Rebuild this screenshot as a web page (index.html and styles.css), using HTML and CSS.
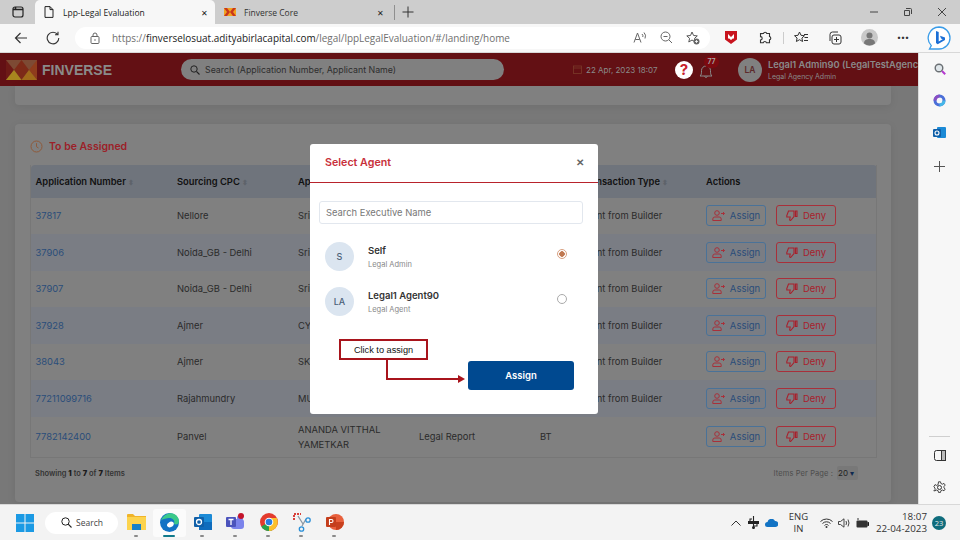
FILE: index.html
```html
<!DOCTYPE html>
<html lang="en">
<head>
    <meta charset="UTF-8">
    <title>Lpp-Legal Evaluation</title>
    <link rel="stylesheet" href="styles.css">
</head>
<body>
    <div class="tabstrip">
        <div class="win-btn"><svg width="12" height="12" viewBox="0 0 12 12"><rect x="1" y="1" width="10" height="10" rx="2" fill="none" stroke="#222" stroke-width="1.2"/><path d="M1 3.5h10M3.5 1v2.5" stroke="#222" stroke-width="1.6"/></svg></div>
        <div class="tab tab-active">
            <svg width="10" height="12" viewBox="0 0 10 12"><path d="M1 .6h5l3 3v7.8H1zM6 .6v3h3" fill="none" stroke="#222" stroke-width="1"/></svg>
            <span class="tab-title">Lpp-Legal Evaluation</span>
            <span class="tab-x">✕</span>
        </div>
        <div class="tab">
            <svg width="12" height="8" viewBox="0 0 12 8"><rect width="12" height="8" fill="#c8361c"/><path d="M0 0l3 4-3 4zM12 0L9 4l3 4zM3 0l3 4 3-4zM3 8l3-4 3 4z" fill="#f2a21e"/></svg>
            <span class="tab-title">Finverse Core</span>
            <span class="tab-x">✕</span>
        </div>
        <div class="tab-sep"></div>
        <svg class="tab-plus" width="12" height="12" viewBox="0 0 12 12"><path d="M6 .5v11M.5 6h11" stroke="#333" stroke-width="1"/></svg>
        <div class="win-controls">
            <svg width="10" height="10" viewBox="0 0 10 10"><path d="M1 5h8" stroke="#444" stroke-width="1"/></svg>
            <svg width="10" height="10" viewBox="0 0 10 10"><path d="M3 1.5h4.5q1 0 1 1V7M1.5 3.5h5v5h-5z" fill="none" stroke="#444" stroke-width="1"/></svg>
            <svg width="10" height="10" viewBox="0 0 10 10"><path d="M1 1l8 8M9 1l-8 8" stroke="#444" stroke-width="1"/></svg>
        </div>
    </div>

    <div class="toolbar">
        <div class="tool"><svg width="14" height="12" viewBox="0 0 14 12"><path d="M13 6H1.5M6.5 1l-5 5 5 5" fill="none" stroke="#333" stroke-width="1.2"/></svg></div>
        <div class="tool"><svg width="14" height="14" viewBox="0 0 14 14"><path d="M11.7 3.6A5.8 5.8 0 1 0 12.8 7M12 .8v3h-3" fill="none" stroke="#333" stroke-width="1.1"/></svg></div>
        <div class="addressbar">
            <svg width="10" height="12" viewBox="0 0 10 12"><rect x="1" y="4.5" width="8" height="7" rx="1" fill="none" stroke="#666"/><path d="M3 4.5V3a2 2 0 0 1 4 0v1.5" fill="none" stroke="#666"/><circle cx="5" cy="8" r=".8" fill="#666"/></svg>
            <span class="url">https://<b>finverselosuat.adityabirlacapital.com</b>/legal/lppLegalEvaluation/#/landing/home</span>
            <div class="address-icons">
                <svg width="14" height="13" viewBox="0 0 14 13"><path d="M1 11.5L4.5 2 8 11.5M2.3 8.5h4.4M9 3q1.400 1.500.8 3M11 1.500q2.500 2.500 1 6" fill="none" stroke="#666" stroke-width="1"/></svg>
                <svg width="13" height="13" viewBox="0 0 13 13"><circle cx="5.500" cy="5.500" r="4.500" fill="none" stroke="#666"/><path d="M8.800 8.800L12 12M3.500 5.500h4" stroke="#666"/></svg>
                <svg width="14" height="14" viewBox="0 0 14 14"><path d="M6 1l1.600 3.500 3.700.4-2.800 2.500.8 3.600L6 9 2.800 11l.8-3.600L.8 4.900l3.700-.4z" fill="none" stroke="#555"/><circle cx="10.500" cy="10.500" r="3" fill="#666"/><path d="M10.500 9v3M9 10.500h3" stroke="#fff" stroke-width=".8"/></svg>
            </div>
        </div>
        <div class="tool-group">
            <div class="tool"><svg width="12" height="13" viewBox="0 0 12 13"><path d="M0 0h12v8.500L6 13 0 8.500z" fill="#c8141e"/><path d="M3 3l3 3 3-3v4.500H7.800L6 9 4.200 7.500H3z" fill="#fff"/></svg></div>
            <div class="tool"><svg width="14" height="14" viewBox="0 0 14 14"><path d="M5.500 2.500a1.700 1.700 0 0 1 3.300 0h2.700v3a1.700 1.700 0 0 1 0 3.300v3H8.500a1.700 1.700 0 0 0-3.300 0H2.500V9a1.700 1.700 0 0 0 0-3.400v-3z" fill="none" stroke="#333" stroke-width="1.100"/></svg></div>
            <div class="tool-sep"></div>
            <div class="tool"><svg width="14" height="13" viewBox="0 0 14 13"><path d="M5.500 1l1.500 3.300 3.500.4-2.600 2.300.7 3.500-3.100-1.800-3.100 1.800.7-3.500L.500 4.700 4 4.300zM10 3.500h4M10.500 6.500H14M10 9.500h4" fill="none" stroke="#333" stroke-width="1"/></svg></div>
            <div class="tool"><svg width="14" height="14" viewBox="0 0 14 14"><rect x="4" y="4" width="9" height="9" rx="2" fill="none" stroke="#333"/><path d="M2 10V3.500A2.500 2.500 0 0 1 4.500 1H10M8.500 6v5M6 8.500h5" fill="none" stroke="#333"/></svg></div>
            <div class="tool"><svg width="17" height="17" viewBox="0 0 17 17"><circle cx="8.500" cy="8.500" r="8.500" fill="#c9c9c9"/><circle cx="8.500" cy="6.500" r="3" fill="#777"/><path d="M3 14.500c0-3.500 2.500-4.500 5.500-4.500s5.500 1 5.500 4.500q-2.500 2-5.500 2t-5.500-2z" fill="#777"/></svg></div>
            <div class="tool more">···</div>
            <div class="tool bing-btn"><svg width="24" height="24" viewBox="0 0 24 24"><path d="M12 1a11 11 0 0 1 0 22H2.500l1.800-3.400A11 11 0 0 1 12 1z" fill="#fff" stroke="#3a9ce8" stroke-width="1.300"/><path d="M9 5l2.700 1v9.500l4-2.300-1.700-.8-1-2.600 5 1.700v2.600l-7.300 4.200L9 17z" fill="#1b6fd6"/></svg></div>
        </div>
    </div>

    <div class="main">
        <div class="page">
            <header class="appbar">
                <svg class="logo" width="31" height="20" viewBox="0 0 31 20"><rect width="31" height="20" fill="#7d4a34"/><path d="M0 0l8 10-8 10z" fill="#6d1a16"/><path d="M31 0l-8 10 8 10z" fill="#8f3c1c"/><path d="M8 10l7.500-10L23 10l-7.500 10z" fill="#7d2a18"/><path d="M0 20l8-10 7.500 10z" fill="#a8861e"/><path d="M15.500 20L23 10l8 10z" fill="#a06a1a"/></svg>
                <span class="brand">FINVERSE</span>
                <div class="app-search">
                    <svg width="10" height="10" viewBox="0 0 10 10"><circle cx="4" cy="4" r="3.200" fill="none" stroke="#222" stroke-width="1"/><path d="M6.500 6.500L9.500 9.500" stroke="#222" stroke-width="1.100"/></svg>
                    <span>Search (Application Number, Applicant Name)</span>
                </div>
                <div class="app-date">
                    <svg width="9" height="9" viewBox="0 0 9 9"><rect x=".5" y="1" width="8" height="7.500" fill="none" stroke="#7a3a2a" stroke-width=".8"/><path d="M.5 3h8" stroke="#7a3a2a" stroke-width=".8"/></svg>
                    <span>22 Apr, 2023 18:07</span>
                </div>
                <div class="help">?</div>
                <div class="bell">
                    <svg width="14" height="16" viewBox="0 0 14 16"><path d="M1 13c1.500-1 1.500-3 1.500-5.500a4.500 4.500 0 0 1 9 0C11.500 10 11.500 12 13 13zM5.500 13.500q1.500 2 3 0" fill="none" stroke="#8a8a8a" stroke-width="1"/></svg>
                    <span class="bell-count">77</span>
                </div>
                <div class="user-avatar">LA</div>
                <div class="user-info">
                    <div class="user-name">Legal1 Admin90 (LegalTestAgency_1_90)</div>
                    <div class="user-role">Legal Agency Admin</div>
                </div>
            </header>

            <div class="content">
                <div class="card card-top"></div>
                <section class="card card-list">
                    <div class="card-title">
                        <svg width="13" height="13" viewBox="0 0 13 13"><circle cx="6.500" cy="6.500" r="5.500" fill="none" stroke="#8f5a3a" stroke-width="1"/><path d="M6.500 3.200v3.500l2 1.300" fill="none" stroke="#8f5a3a" stroke-width="1"/></svg>
                        <span>To be Assigned</span>
                    </div>
                    <table class="grid">
                        <colgroup>
                            <col class="c1"><col class="c2"><col class="c3"><col class="c4"><col class="c5"><col class="c6">
                        </colgroup>
                        <thead>
                            <tr>
                                <th>Application Number <span class="sort">⬍</span></th>
                                <th>Sourcing CPC <span class="sort">⬍</span></th>
                                <th>Applicant</th>
                                <th>Report Type</th>
                                <th class="th-type">Transaction Type <span class="sort">⬍</span></th>
                                <th>Actions</th>
                            </tr>
                        </thead>
                        <tbody id="rows"></tbody>
                    </table>
                    <div class="list-foot">
                        <div class="showing">Showing <b>1</b> to <b>7</b> of <b>7</b> Items</div>
                        <div class="per-page">Items Per Page : <span class="per-select">20 <i>▾</i></span></div>
                    </div>
                </section>
            </div>
        </div>

        <aside class="sidebar">
            <svg width="12" height="12" viewBox="0 0 12 12"><circle cx="5" cy="5" r="3.800" fill="#dfe6ea" stroke="#6a6f73" stroke-width="1.400"/><path d="M8 8l3.200 3.200" stroke="#b53ad0" stroke-width="2"/></svg>
            <svg width="13" height="13" viewBox="0 0 13 13"><circle cx="6.500" cy="6.500" r="4.500" fill="none" stroke="#4b6fd8" stroke-width="3"/><path d="M2 6.500a4.500 4.500 0 0 1 4.500-4.500" fill="none" stroke="#8a4fc4" stroke-width="3"/><path d="M11 6.500a4.500 4.500 0 0 1-4.500 4.500" fill="none" stroke="#45b8e8" stroke-width="3"/></svg>
            <svg width="13" height="13" viewBox="0 0 13 13"><rect x="4" y="1" width="9" height="11" rx="1" fill="#1b8ad6"/><rect y="3" width="8" height="8" rx="1" fill="#0f5fa8"/><circle cx="4" cy="7" r="2" fill="none" stroke="#fff" stroke-width="1.100"/></svg>
            <svg class="side-add" width="11" height="11" viewBox="0 0 11 11"><path d="M5.500 0v11M0 5.500h11" stroke="#555" stroke-width="1"/></svg>
            <div class="side-bottom">
                <div class="side-rule"></div>
                <svg width="12" height="11" viewBox="0 0 12 11"><rect x=".5" y=".5" width="11" height="10" rx="2" fill="none" stroke="#333"/><rect x="7.500" y=".5" width="4" height="10" fill="#bbb" stroke="#333"/></svg>
                <svg width="13" height="13" viewBox="0 0 13 13"><circle cx="6.500" cy="6.500" r="2" fill="none" stroke="#333"/><path d="M5.500 .8h2l.4 1.700 1.500.7 1.600-.8 1.200 1.700-1.200 1.200v1.600l1.200 1.200-1.200 1.700-1.600-.8-1.500.7-.4 1.700h-2l-.4-1.700-1.500-.7-1.600.8L.8 9.800 2 8.600V7L.8 5.800 2 3.600l1.600.8 1.500-.7z" fill="none" stroke="#333" stroke-width=".9"/></svg>
            </div>
        </aside>
    </div>

    <footer class="taskbar">
        <svg class="start" width="18" height="18" viewBox="0 0 18 18"><path d="M0 0h8.500v8.500H0zM9.500 0H18v8.500H9.500zM0 9.500h8.500V18H0zM9.500 9.500H18V18H9.500z" fill="#1b9ae4"/></svg>
        <div class="task-search">
            <svg width="11" height="11" viewBox="0 0 11 11"><circle cx="4.500" cy="4.500" r="3.700" fill="none" stroke="#222"/><path d="M7.200 7.200l3.300 3.300" stroke="#222" stroke-width="1.100"/></svg>
            <span>Search</span>
        </div>
        <div class="task-icons">
            <div class="task-app"><svg width="19" height="16" viewBox="0 0 19 16"><path d="M0 1q0-1 1-1h5l2 2h11v14H0z" fill="#f0b429"/><rect y="3" width="19" height="13" fill="#fcd34d"/><rect x="5" y="10" width="9" height="6" fill="#1580c8"/></svg></div>
            <div class="task-app app-on"><svg width="19" height="19" viewBox="0 0 19 19"><circle cx="9.500" cy="9.500" r="9.500" fill="#1273c4"/><path d="M1 7.500C3 2 8 0 11 .2c4.500.3 8 3.500 8 8.300 0 3-3 3.500-5 2.500 1.500-4-2-6.500-5.500-6C5 5.500 2.500 6 1 7.500z" fill="#3bc98a"/><path d="M9 9.500c1.500-2 5.500-1 4.800 1.800-.5 2.500-4 4-6 2.500-1.500-1-1-3.300 1.200-4.300z" fill="#fff"/></svg></div>
            <div class="task-app"><svg width="18" height="16" viewBox="0 0 18 16"><rect x="5" width="13" height="16" rx="1" fill="#1b8ad6"/><path d="M5 8h13v8H5z" fill="#0f6cbd"/><rect y="3" width="10" height="10" rx="1" fill="#0f5fa8"/><circle cx="5" cy="8" r="2.500" fill="none" stroke="#fff" stroke-width="1.300"/></svg></div>
            <div class="task-app"><svg width="19" height="18" viewBox="0 0 19 18"><circle cx="14" cy="5" r="3" fill="#7b83eb"/><rect x="5" y="6" width="13" height="10" rx="3" fill="#7b83eb"/><rect y="4" width="10" height="10" rx="1" fill="#4b53bc"/><path d="M2.500 6.500h5M5 6.500V12" stroke="#fff" stroke-width="1.300"/><circle cx="15" cy="3" r="3" fill="#c4142a"/></svg></div>
            <div class="task-app"><svg width="18" height="18" viewBox="0 0 18 18"><circle cx="9" cy="9" r="9" fill="#e33b2e"/><path d="M9 9L1.200 13.500A9 9 0 0 0 9 18c1 0 2-.2 3-.5z" fill="#2aa24a"/><path d="M9 5h7.800A9 9 0 0 1 9 18z" fill="#fbc02d"/><circle cx="9" cy="9" r="4.300" fill="#fff"/><circle cx="9" cy="9" r="3.300" fill="#2a7de1"/></svg></div>
            <div class="task-app"><svg width="18" height="19" viewBox="0 0 18 19"><path d="M1 7V1h7" fill="none" stroke="#d8403a" stroke-width="2" stroke-dasharray="2 1"/><path d="M5 3l5 8M13 6L9 13" stroke="#8a97a3" stroke-width="1.300"/><circle cx="15" cy="7" r="2.200" fill="none" stroke="#2a8fd8" stroke-width="1.300"/><circle cx="8.500" cy="16" r="2.200" fill="none" stroke="#2a8fd8" stroke-width="1.300"/></svg></div>
            <div class="task-app"><svg width="18" height="16" viewBox="0 0 18 16"><circle cx="10" cy="8" r="8" fill="#e8603c"/><path d="M10 8h8a8 8 0 0 1-8 8z" fill="#c8401e"/><rect y="3" width="10" height="10" rx="1" fill="#c43e1c"/><path d="M3.500 11V5.500h2a1.500 1.500 0 0 1 0 3h-2" fill="none" stroke="#fff" stroke-width="1.100"/></svg></div>
        </div>
        <div class="tray">
            <svg width="10" height="6" viewBox="0 0 10 6"><path d="M.5 5.500L5 1l4.500 4.500" fill="none" stroke="#333"/></svg>
            <svg width="13" height="13" viewBox="0 0 13 13"><path d="M6.500 0v13M3 5V3h2M10 8v2H7" fill="none" stroke="#222" stroke-width="1.100"/><rect x="1" y="5" width="11" height="3" fill="#222"/><circle cx="6.500" cy="11.500" r="1.500" fill="#222"/></svg>
            <svg width="13" height="8" viewBox="0 0 13 8"><path d="M2.500 8a2.500 2.500 0 0 1 0-5 4 4 0 0 1 7.500-1 3 3 0 0 1 .5 6z" fill="#1273c4"/></svg>
            <div class="lang">ENG<br>IN</div>
            <svg width="13" height="10" viewBox="0 0 13 10"><path d="M.5 3.500a8.500 8.500 0 0 1 12 0M2.500 5.500a5.500 5.500 0 0 1 8 0M4.500 7.500a2.500 2.500 0 0 1 4 0" fill="none" stroke="#333"/><circle cx="6.500" cy="9" r="1" fill="#333"/></svg>
            <svg width="12" height="10" viewBox="0 0 12 10"><path d="M.5 3.500h2L6 .8v8.400L2.500 6.500h-2zM8 3q1 2 0 4M10 1.500q2 3.500 0 7" fill="none" stroke="#333" stroke-width=".9"/></svg>
            <svg width="13" height="10" viewBox="0 0 13 10"><rect x=".5" y="2.500" width="11" height="7" rx="1" fill="#333"/><path d="M11.500 4.500h1.500v3h-1.500M2 2V0" stroke="#333"/></svg>
            <div class="clock"><div>18:07</div><div>22-04-2023</div></div>
            <div class="notif">23</div>
        </div>
    </footer>

    <!-- dialog, with the tutorial callout on top of it -->
    <div class="modal">
        <div class="modal-head">
            <span>Select Agent</span>
            <span class="modal-x">✕</span>
        </div>
        <div class="modal-body">
            <div class="exec-search">Search Executive Name</div>
            <div class="agent">
                <div class="agent-avatar">S</div>
                <div class="agent-text"><div class="agent-name">Self</div><div class="agent-role">Legal Admin</div></div>
                <div class="radio radio-on"></div>
            </div>
            <div class="agent">
                <div class="agent-avatar">LA</div>
                <div class="agent-text"><div class="agent-name">Legal1 Agent90</div><div class="agent-role">Legal Agent</div></div>
                <div class="radio"></div>
            </div>
            <div class="modal-foot"><button class="assign-main">Assign</button></div>
        </div>
    </div>
    <div class="callout">Click to assign</div>
    <svg class="callout-line" width="84" height="24" viewBox="0 0 84 24"><path d="M1 0v19h72" fill="none" stroke="#a8141c" stroke-width="2"/><path d="M72 15l7 4-7 4z" fill="#a8141c"/></svg>

    <script>
        const data = [
            ["37817", "Nellore", "Sri"],
            ["37906", "Noida_GB - Delhi", "Sri"],
            ["37907", "Noida_GB - Delhi", "Sri"],
            ["37928", "Ajmer", "CY"],
            ["38043", "Ajmer", "SK"],
            ["77211099716", "Rajahmundry", "MU"],
            ["7782142400", "Panvel", "ANANDA VITTHAL YAMETKAR"]
        ];
        const assignIcon = '<svg width="13" height="11" viewBox="0 0 13 11"><circle cx="5" cy="3" r="2.300" fill="none" stroke="#a8303a"/><path d="M.8 10.500V9q0-2 2-2h4.400q2 0 2 2v1.500zM9 3.500h3.500M11 2l1.500 1.500L11 5" fill="none" stroke="#a8303a"/></svg>';
        const denyIcon = '<svg width="12" height="11" viewBox="0 0 12 11"><path d="M8 1H2.500L.8 5.500V7h3.400l-.6 3 1 .5L8 6.500zM9.500 1H11v5.500H9.500z" fill="none" stroke="#a8202c" stroke-width="1.100"/></svg>';
        let tabla = '';
        data.forEach(function (r, i) {
            const last = i === data.length - 1;
            tabla += `<tr class="${last ? 'row-last' : ''}">
                        <td><span class="app-link">${r[0]}</span></td>
                        <td>${r[1]}</td>
                        <td>${r[2]}</td>
                        <td>${last ? 'Legal Report' : ''}</td>
                        <td>${last ? 'BT' : 'Flat Apartment from Builder'}</td>
                        <td>
                            <div class="actions">
                                <span class="btn btn-assign">${assignIcon}Assign</span>
                                <span class="btn btn-deny">${denyIcon}Deny</span>
                            </div>
                        </td>
                      </tr>`;
        });
        document.getElementById("rows").innerHTML = tabla;
    </script>
</body>
</html>
```

FILE: styles.css
```css
* {
    box-sizing: border-box;
}
html, body {
    margin: 0;
    height: 100%;
}
body {
    width: 960px;
    height: 540px;
    overflow: hidden;
    display: flex;
    flex-direction: column;
    font-family: "Open Sans", sans-serif;
    color: #222;
    background: #f7f7f7;
}

/* browser chrome */
.tabstrip {
    height: 24px;
    flex: none;
    display: flex;
    align-items: flex-end;
    background: #cdcdcd;
}
.win-btn {
    width: 35px;
    height: 24px;
    display: flex;
    align-items: center;
    justify-content: center;
}
.tab {
    width: 176px;
    height: 24px;
    padding: 0 7px 0 9px;
    display: flex;
    align-items: center;
    font-size: 8.5px;
    color: #333;
}
.tab-active {
    width: 180px;
    background: #f7f7f7;
    border-radius: 5px 5px 0 0;
    color: #222;
}
.tab svg {
    margin: 0 8px 0 0;
    flex: none;
}
.tab-active svg {
    margin: 0 9px 0 0;
}
.tab-title {
    flex: 1;
}
.tab-x {
    font-size: 8px;
    color: #222;
}
.tab-sep {
    width: 1px;
    height: 15px;
    margin: 0 0 4px 3px;
    background: #8f8f8f;
}
.tab-plus {
    margin: 0 0 6px 7px;
}
.win-controls {
    margin-left: auto;
    height: 24px;
    display: flex;
    align-items: center;
    gap: 24px;
    padding-right: 13px;
}
.toolbar {
    height: 29px;
    flex: none;
    display: flex;
    align-items: center;
    padding: 0 0 1px 5px;
    background: #f7f7f7;
    border-bottom: 1px solid #d8d8d8;
}
.tool {
    width: 32px;
    height: 24px;
    flex: none;
    display: flex;
    align-items: center;
    justify-content: center;
}
.more {
    font-size: 14px;
    font-weight: 700;
    color: #333;
}
.addressbar {
    width: 635px;
    height: 22px;
    margin-left: 6px;
    padding: 0 10px 0 15px;
    display: flex;
    align-items: center;
    gap: 12px;
    background: #fff;
    border-radius: 11px;
    flex: none;
}
.url {
    flex: 1;
    font-size: 9.95px;
    color: #6f6f6f;
    white-space: nowrap;
}
.url b {
    font-weight: 400;
    color: #222;
}
.address-icons {
    display: flex;
    align-items: center;
    gap: 13px;
}
.tool-group {
    display: flex;
    align-items: center;
    gap: 2px;
    margin-left: 5px;
}
.tool-sep {
    width: 1px;
    height: 12px;
    margin-right: -1px;
    background: #ccc;
}
.bing-btn {
    margin-left: 2px;
}

/* app area */
.main {
    flex: 1;
    min-height: 0;
    display: flex;
}
.page {
    width: 918px;
    flex: none;
    display: flex;
    flex-direction: column;
    background: #787878;
    font-family: Inter, "Noto Sans", sans-serif;
    overflow: hidden;
}
.appbar {
    height: 33px;
    flex: none;
    display: flex;
    align-items: center;
    padding-left: 6px;
    background: #631014;
    white-space: nowrap;
}
.appbar > * {
    flex: none;
}
.brand {
    width: 139px;
    margin-left: 5px;
    font-size: 14px;
    font-weight: 700;
    color: #8a8a8a;
    font-family: "Liberation Sans", sans-serif;
}
.app-search {
    width: 323px;
    height: 21px;
    padding-left: 9px;
    display: flex;
    align-items: center;
    gap: 5px;
    border-radius: 11px;
    background: #808080;
    font-size: 8.8px;
    color: #2e2e2e;
}
.app-date {
    width: 102px;
    margin-left: 69px;
    display: flex;
    align-items: center;
    gap: 4px;
    font-size: 8px;
    color: #8a8a8a;
}
.help {
    width: 18px;
    height: 18px;
    border-radius: 50%;
    background: #fff;
    color: #c8202c;
    font-size: 15px;
    font-weight: 700;
    line-height: 18px;
    text-align: center;
}
.bell {
    width: 20px;
    height: 33px;
    margin-left: 6px;
    padding-top: 10px;
    position: relative;
}
.bell-count {
    position: absolute;
    left: 5px;
    top: 3px;
    width: 15px;
    height: 12px;
    border-radius: 7px;
    background: #7c0a10;
    color: #aaa;
    font-size: 7px;
    font-weight: 600;
    line-height: 11px;
    text-align: center;
}
.user-avatar {
    width: 24px;
    height: 24px;
    margin-left: 19px;
    border-radius: 50%;
    background: #808080;
    color: #5c2a2c;
    font-size: 8.5px;
    font-weight: 600;
    line-height: 24px;
    text-align: center;
}
.user-info {
    margin-left: 6px;
    color: #8a8a8a;
}
.user-name {
    font-size: 9.3px;
    font-weight: 600;
}
.user-role {
    margin-top: 2px;
    font-size: 7px;
}
.content {
    flex: 1;
    min-height: 0;
    padding: 0 27px 0 15px;
}
.card {
    background: #808080;
    border-radius: 0 0 4px 4px;
    box-shadow: 0 2px 8px rgba(0,0,0,0.08);
}
.card-top {
    height: 19px;
    margin-bottom: 19px;
}
.card-list {
    height: 378px;
    padding: 15px 15px 0;
    border-radius: 4px;
}
.card-title {
    height: 14px;
    display: flex;
    align-items: center;
    gap: 6px;
    margin-bottom: 12px;
    font-size: 10.5px;
    font-weight: 600;
    color: #9c2028;
}

/* list */
.grid {
    width: 846px;
    table-layout: fixed;
    border-collapse: collapse;
    font-size: 9.4px;
    color: #2b2b2b;
    border: 1px solid #777;
    border-top: none;
}
.c1 { width: 142px; }
.c2, .c3, .c4 { width: 121px; }
.c5 { width: 166px; }
.c6 { width: 175px; }
.grid th {
    height: 32.5px;
    padding: 0 0 0 4.5px;
    background: #6f747c;
    font-weight: 600;
    color: #111;
    text-align: left;
    white-space: nowrap;
}
.grid thead th:first-child {
    border-radius: 4px 0 0 0;
}
.grid thead th:last-child {
    border-radius: 0 4px 0 0;
}
.grid .th-type {
    padding-left: 46px;
}
.sort {
    font-size: 7px;
    color: #5e636a;
}
.grid td {
    height: 36.5px;
    padding: 0 0 0 4.5px;
    line-height: 15px;
    white-space: nowrap;
}
.grid tbody tr:nth-child(even) {
    background: #7a7d84;
}
.grid .row-last td {
    height: 41px;
}
.grid .row-last td:nth-child(3) {
    white-space: normal;
}
.app-link {
    color: #2a4d7a;
}
.actions {
    display: flex;
    gap: 10px;
}
.btn {
    width: 60px;
    height: 21px;
    display: flex;
    align-items: center;
    justify-content: center;
    gap: 5px;
    border-radius: 3px;
    font-size: 9.5px;
}
.btn-assign {
    border: 1px solid #4a7298;
    color: #2a4d7a;
}
.btn-deny {
    border: 1px solid #a8303a;
    color: #a8202c;
}
.list-foot {
    height: 14px;
    margin-top: 8px;
    display: flex;
    align-items: center;
    justify-content: space-between;
    font-size: 7.5px;
    color: #333;
}
.showing {
    padding-left: 5px;
    font-weight: 600;
}
.showing b {
    color: #1c1c1c;
}
.per-page {
    display: flex;
    align-items: center;
    gap: 4px;
    padding-right: 18px;
    color: #4c4c4c;
    letter-spacing: .1px;
}
.per-select {
    width: 21px;
    height: 14px;
    padding-left: 1px;
    background: #787878;
    border-radius: 2px;
    color: #222;
    font-size: 8px;
    line-height: 14px;
}
.per-select i {
    font-style: normal;
    color: #0f2a50;
}

/* edge sidebar */
.sidebar {
    width: 42px;
    flex: none;
    display: flex;
    flex-direction: column;
    align-items: center;
    gap: 19px;
    padding-top: 10px;
    background: #f7f7f7;
    border-left: 1px solid #dcdcdc;
}
.side-add {
    margin-top: 3px;
}
.side-bottom {
    margin-top: auto;
    padding-bottom: 10px;
    display: flex;
    flex-direction: column;
    align-items: center;
    gap: 20px;
}
.side-rule {
    width: 21px;
    height: 1px;
    margin-bottom: -7px;
    background: #cfcfcf;
}

/* windows taskbar */
.taskbar {
    height: 36px;
    flex: none;
    display: flex;
    align-items: center;
    padding-left: 16px;
    background: #f3f3f3;
    border-top: 1px solid #d8d8d8;
}
.task-search {
    width: 73px;
    height: 22px;
    margin-left: 11px;
    padding-left: 16px;
    display: flex;
    align-items: center;
    gap: 4px;
    background: #fff;
    border-radius: 11px;
    font-size: 8.5px;
    color: #444;
}
.task-icons {
    display: flex;
    margin-left: 2px;
}
.task-app {
    width: 33px;
    height: 28px;
    padding-bottom: 1px;
    display: flex;
    align-items: center;
    justify-content: center;
    position: relative;
}
.task-app::after {
    content: "";
    position: absolute;
    left: 14px;
    bottom: 0;
    width: 4px;
    height: 2px;
    border-radius: 1px;
    background: #8a8a8a;
}
.app-on {
    background: #fbfbfb;
    border-radius: 3px;
}
.app-on::after {
    left: 10px;
    width: 12px;
    background: #117a8b;
}
.tray {
    margin-left: auto;
    padding-right: 14px;
    display: flex;
    align-items: center;
    font-size: 9.5px;
    color: #333;
}
.tray svg {
    flex: none;
    margin-right: 5.5px;
}
.lang {
    width: 32px;
    margin: 0 5px 0 -1px;
    text-align: center;
    line-height: 12px;
}
.clock {
    width: 53px;
    font-size: 9.8px;
    text-align: right;
    line-height: 12px;
    white-space: nowrap;
}
.notif {
    width: 14px;
    height: 14px;
    margin-left: 5px;
    border-radius: 50%;
    background: #0f6c7c;
    color: #e8e8e8;
    font-size: 7.5px;
    line-height: 14px;
    text-align: center;
}

/* dialog */
.modal {
    position: absolute;
    left: 310px;
    top: 144px;
    width: 288px;
    height: 270px;
    background: #fff;
    border-radius: 3px;
    font-family: Inter, "Noto Sans", sans-serif;
}
.modal-head {
    height: 39px;
    padding: 0 14px 2px 15px;
    display: flex;
    align-items: center;
    justify-content: space-between;
    border-bottom: 1px solid #b8232c;
    font-size: 10.7px;
    font-weight: 600;
    color: #c8303a;
}
.modal-x {
    font-size: 9.5px;
    color: #666;
}
.modal-body {
    padding: 18px 15px 0 9px;
}
.exec-search {
    width: 264px;
    height: 23px;
    padding-left: 6px;
    border: 1px solid #e2e7ee;
    border-radius: 3px;
    font-size: 9.4px;
    line-height: 21px;
    color: #777;
}
.agent {
    height: 29px;
    margin: 18px 0 0 6px;
    display: flex;
    align-items: center;
}
.agent + .agent {
    margin-top: 16px;
}
.agent-avatar {
    width: 29px;
    height: 29px;
    flex: none;
    border-radius: 50%;
    background: #dbe5f0;
    color: #4c5f78;
    font-size: 9px;
    font-weight: 500;
    line-height: 29px;
    text-align: center;
}
.agent-text {
    flex: 1;
    margin: 0 0 0 14px;
}
.agent-name {
    font-size: 9.5px;
    font-weight: 600;
    color: #333;
}
.agent-role {
    margin-top: 4px;
    font-size: 7.5px;
    color: #888;
}
.radio {
    width: 10px;
    height: 10px;
    margin: -6px 16px 0 0;
    border: 1px solid #aaa;
    border-radius: 50%;
    background: #fff;
}
.radio-on {
    border-color: #d8a080;
    background: radial-gradient(circle, #c07850 0 2.5px, #fff 3px);
}
.modal-foot {
    margin-top: 45px;
    display: flex;
    justify-content: flex-end;
    padding-right: 9px;
}
.assign-main {
    width: 106px;
    height: 29px;
    border: none;
    border-radius: 3px;
    background: #004990;
    color: #fff;
    font-family: Inter, sans-serif;
    font-size: 9.5px;
    font-weight: 600;
}

/* tutorial callout */
.callout {
    position: absolute;
    left: 339px;
    top: 339px;
    width: 89px;
    height: 21px;
    border: 2px solid #a8141c;
    background: #fff;
    font-family: "Liberation Sans", sans-serif;
    font-size: 9.2px;
    line-height: 18px;
    text-align: center;
    color: #111;
}
.callout-line {
    position: absolute;
    left: 386px;
    top: 360px;
}
```
